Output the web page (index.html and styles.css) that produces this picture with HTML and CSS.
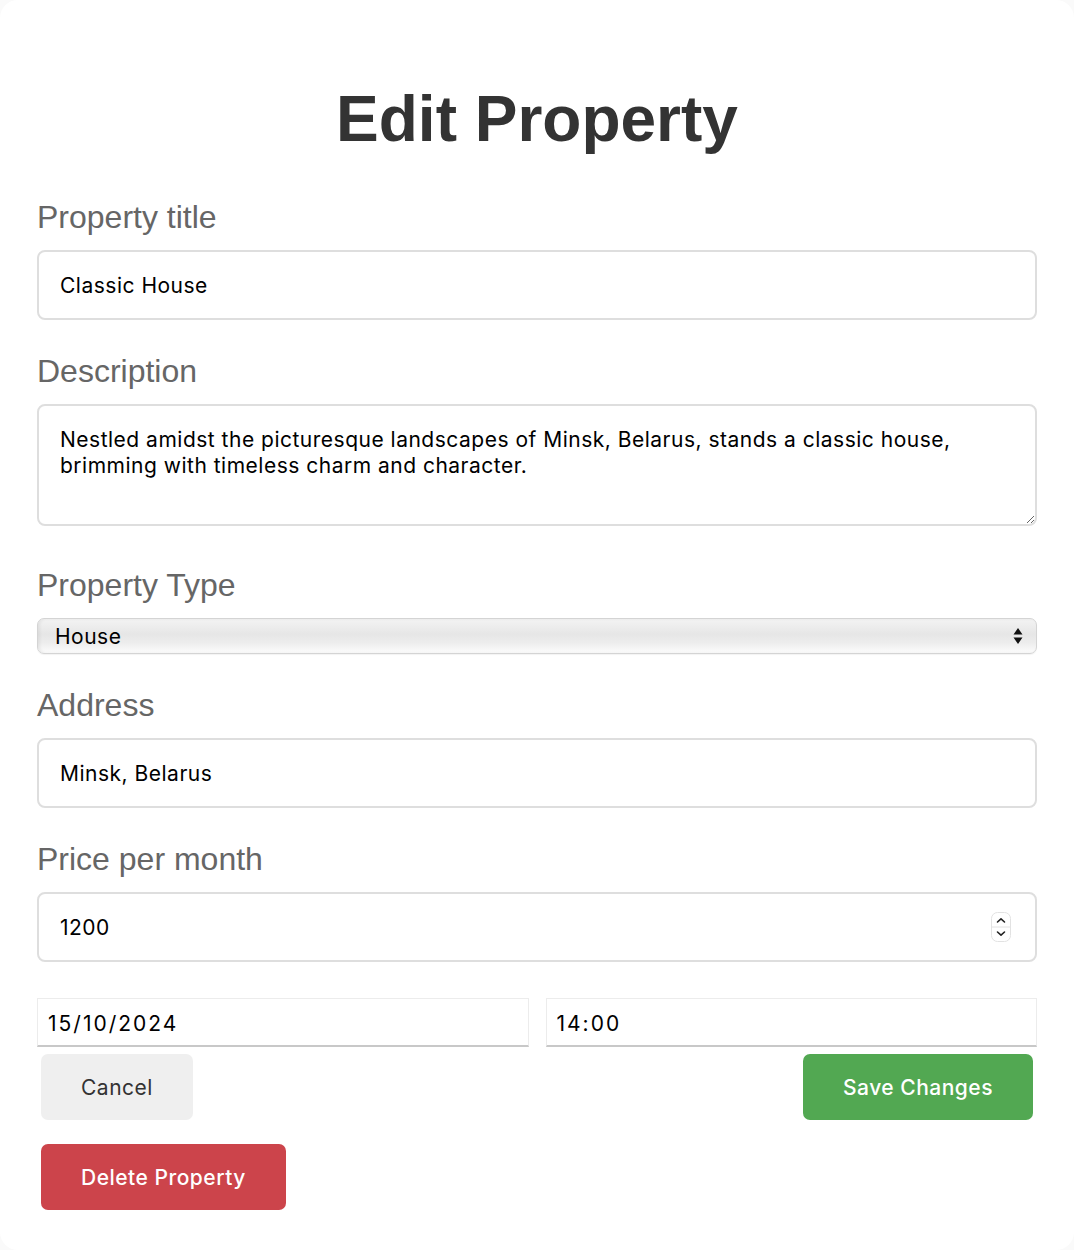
FILE: index.html
```html
<!DOCTYPE html>
<html lang="en">
<head>
<meta charset="utf-8">
<title>Edit Property</title>
<link rel="stylesheet" href="styles.css">
</head>
<body>
<div class="card">
  <h1 class="title">Edit Property</h1>
  <form class="form">
    <div class="group">
      <label class="label" for="title">Property title</label>
      <input class="field" id="title" type="text" value="Classic House">
    </div>
    <div class="group group-area">
      <label class="label" for="desc">Description</label>
      <textarea class="field area" id="desc">Nestled amidst the picturesque landscapes of Minsk, Belarus, stands a classic house, brimming with timeless charm and character.</textarea>
    </div>
    <div class="group">
      <label class="label" for="type">Property Type</label>
      <div class="select-wrap">
        <select class="select" id="type">
          <option>House</option>
          <option>Apartment</option>
        </select>
        <svg class="select-arrows" width="10" height="20" viewBox="0 0 10 20"><path d="M5 2 L9.5 8.5 L0.5 8.5 Z M5 18 L9.5 11.5 L0.5 11.5 Z" fill="#111"/></svg>
      </div>
    </div>
    <div class="group">
      <label class="label" for="addr">Address</label>
      <input class="field" id="addr" type="text" value="Minsk, Belarus">
    </div>
    <div class="group group-price">
      <label class="label" for="price">Price per month</label>
      <div class="number-wrap">
        <input class="field number" id="price" type="number" value="1200">
        <svg class="spinner" width="20" height="30" viewBox="0 0 20 30"><rect x="0.5" y="0.5" width="19" height="29" rx="6" fill="#fff" stroke="#e2e2e2"/><line x1="1" y1="15" x2="19" y2="15" stroke="#e2e2e2"/><path d="M6.5 10 L10 6.8 L13.5 10" fill="none" stroke="#222" stroke-width="1.6" stroke-linecap="round" stroke-linejoin="round"/><path d="M6.5 20 L10 23.2 L13.5 20" fill="none" stroke="#222" stroke-width="1.6" stroke-linecap="round" stroke-linejoin="round"/></svg>
      </div>
    </div>
    <div class="datetime">
      <input class="dt" type="text" value="15/10/2024">
      <input class="dt" type="text" value="14:00">
    </div>
    <div class="actions">
      <button type="button" class="btn btn-cancel">Cancel</button>
      <button type="button" class="btn btn-save">Save Changes</button>
    </div>
    <div class="danger">
      <button type="button" class="btn btn-delete">Delete Property</button>
    </div>
  </form>
</div>
</body>
</html>
```

FILE: styles.css
```css
* { box-sizing: border-box; }

html, body {
  margin: 0;
  padding: 0;
  background: #fafafa;
}

.card {
  display: flow-root;
  background: #fff;
  border-radius: 18px;
  min-height: 100vh;
  padding: 0 37px 40px;
}

.title {
  margin: 82px 0 40px;
  font-family: "Liberation Sans", Arial, sans-serif;
  font-weight: 700;
  font-size: 64px;
  line-height: 74px;
  color: #333;
  text-align: center;
}

.form { margin: 0; }

.group { margin-bottom: 30px; }
.group-area { margin-bottom: 38px; }
.group-price { margin-bottom: 36px; }

.label {
  display: block;
  font-family: "Liberation Sans", Arial, sans-serif;
  font-size: 32px;
  line-height: 38px;
  padding-top: 2px;
  color: #666;
  margin-bottom: 14px;
}

.field {
  display: block;
  width: 100%;
  height: 70px;
  margin: 0;
  padding: 1px 21px 0;
  border: 2px solid #dedede;
  border-radius: 8px;
  background: #fff;
  font-family: Inter, "Noto Sans", sans-serif;
  font-size: 21px;
  letter-spacing: 0.5px;
  color: #000;
  outline: none;
}

.area {
  height: 122px;
  padding: 21px 21px 20px;
  line-height: 26px;
  resize: vertical;
}

.select-wrap { position: relative; }

.select {
  display: block;
  width: 100%;
  height: 36px;
  margin: 0;
  padding: 0 40px 0 17px;
  -webkit-appearance: none;
  appearance: none;
  border: 1px solid #d4d4d4;
  border-radius: 7px;
  background: linear-gradient(to bottom, #f3f3f3 0%, #e6e6e6 45%, #ededed 70%, #fcfcfc 100%);
  box-shadow: inset 2px 0 3px rgba(0,0,0,0.06), 0 1px 1px rgba(0,0,0,0.05);
  font-family: Inter, "Noto Sans", sans-serif;
  font-size: 21px;
  letter-spacing: 0.5px;
  color: #000;
  outline: none;
}

.select-arrows {
  position: absolute;
  right: 14px;
  top: 8px;
  pointer-events: none;
}

.number-wrap { position: relative; }

.number { -moz-appearance: textfield; }
.number::-webkit-outer-spin-button,
.number::-webkit-inner-spin-button {
  -webkit-appearance: none;
  margin: 0;
}

.spinner {
  position: absolute;
  right: 26px;
  top: 20px;
  pointer-events: none;
}

.datetime {
  display: flex;
  gap: 17px;
}

.dt {
  flex: 1;
  min-width: 0;
  height: 49px;
  margin: 0;
  padding: 3px 10px 0;
  border: 1px solid #ececec;
  border-bottom: 2px solid #c8c8c8;
  border-radius: 0;
  background: #fff;
  font-family: Inter, "Noto Sans", sans-serif;
  font-size: 21px;
  letter-spacing: 2px;
  color: #000;
  outline: none;
}

.actions {
  display: flex;
  justify-content: space-between;
  margin-top: 7px;
  padding: 0 4px;
}

.danger {
  margin-top: 24px;
  padding: 0 4px;
}

.btn {
  height: 66px;
  padding: 0 40px;
  border: none;
  border-radius: 7px;
  font-family: Inter, "Noto Sans", sans-serif;
  font-size: 21px;
  letter-spacing: 0.5px;
  cursor: pointer;
}

.btn-cancel {
  background: #efefef;
  color: #333;
}

.btn-save {
  background: #52a852;
  color: #fff;
  font-weight: 500;
}

.btn-delete {
  background: #cc444b;
  color: #fff;
  font-weight: 500;
}
```
